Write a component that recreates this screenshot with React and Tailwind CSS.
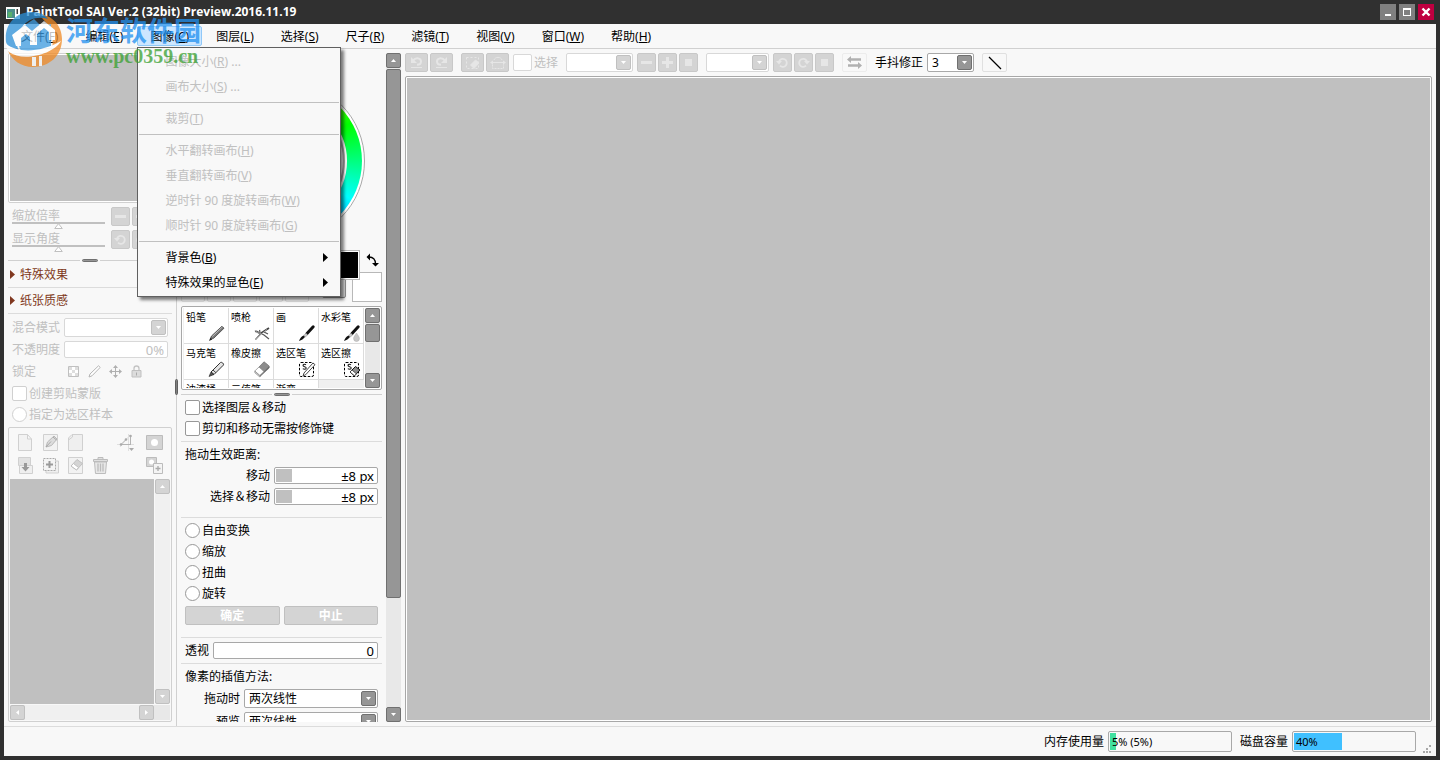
import React, { useState } from 'react';

const menus = [
  ['文件', 'F'],
  ['编辑', 'E'],
  ['图像', 'C'],
  ['图层', 'L'],
  ['选择', 'S'],
  ['尺子', 'R'],
  ['滤镜', 'T'],
  ['视图', 'V'],
  ['窗口', 'W'],
  ['帮助', 'H'],
];

const imageMenu = [
  { text: '图像大小', k: 'R', more: true, off: true },
  { text: '画布大小', k: 'S', more: true, off: true },
  null,
  { text: '裁剪', k: 'T', off: true },
  null,
  { text: '水平翻转画布', k: 'H', off: true },
  { text: '垂直翻转画布', k: 'V', off: true },
  { text: '逆时针 90 度旋转画布', k: 'W', off: true },
  { text: '顺时针 90 度旋转画布', k: 'G', off: true },
  null,
  { text: '背景色', k: 'B', sub: true },
  { text: '特殊效果的显色', k: 'E', sub: true },
];

/* ---------- small controls ---------- */

function Arrow({ dir = 'down', className = '' }) {
  const points = {
    down: '0,0 5,0 2.5,3',
    up: '0,3 5,3 2.5,0',
    left: '3,0 3,5 0,2.5',
    right: '0,0 0,5 3,2.5',
  };
  return (
    <svg width="5" height="5" viewBox={dir === 'left' || dir === 'right' ? '-1 0 5 5' : '0 -1 5 5'} className={className}>
      <polygon points={points[dir]} fill="#fff" />
    </svg>
  );
}

function ScrollButton({ dir, off }) {
  return (
    <button
      aria-label={dir}
      className={`flex size-[15px] shrink-0 items-center justify-center rounded-xs border ${
        off ? 'border-[#c0c0c0] bg-[#d4d4d4]' : 'border-[#707070] bg-[#969696]'
      }`}
    >
      <Arrow dir={dir} />
    </button>
  );
}

function Combo({ label, options = [''], off, className = '' }) {
  return (
    <div className={`relative h-[19px] ${className}`}>
      <select
        aria-label={label}
        disabled={off}
        className={`block h-full w-full appearance-none rounded-xs border bg-white pl-1 text-xs leading-4 opacity-100 ${
          off ? 'border-[#d8d8d8]' : 'border-[#a8a8a8]'
        }`}
      >
        {options.map((o) => (
          <option key={o}>{o}</option>
        ))}
      </select>
      <span
        className={`pointer-events-none absolute top-0.5 right-0.5 flex size-[15px] items-center justify-center rounded-xs border ${
          off ? 'border-[#c0c0c0] bg-[#d4d4d4]' : 'border-[#707070] bg-[#969696]'
        }`}
      >
        <Arrow />
      </span>
    </div>
  );
}

function Check({ type = 'checkbox', name, label, off }) {
  return (
    <label className={`flex h-[17px] items-center gap-0.5 ${off ? 'text-[#c0c0c0]' : ''}`}>
      <input
        type={type}
        name={name}
        disabled={off}
        className={`size-[15px] shrink-0 appearance-none border bg-white ${
          type === 'radio' ? 'rounded-full' : 'rounded-xs'
        } ${off ? 'border-[#d0d0d0]' : 'border-[#989898]'} checked:bg-[#969696]`}
      />
      {label}
    </label>
  );
}

function ToolButton({ label, wide, children }) {
  return (
    <button
      aria-label={label}
      disabled
      className={`flex h-[19px] shrink-0 items-center justify-center rounded-xs border border-[#c8c8c8] bg-[#d4d4d4] text-[#e6e6e6] ${
        wide ? 'w-[23px]' : 'w-[19px]'
      }`}
    >
      {children}
    </button>
  );
}

function Splitter() {
  return (
    <div className="flex h-[3px] shrink-0 items-center gap-0.5">
      <span className="h-px flex-1 bg-[#d0d0d0]" />
      <span className="h-[3px] w-4 rounded-full border border-[#707070] bg-[#969696]" />
      <span className="h-px flex-1 bg-[#d0d0d0]" />
    </div>
  );
}

function Line() {
  return <div className="h-px shrink-0 bg-[#dcdcdc]" />;
}

function ViewSlider({ label }) {
  return (
    <label className="relative block w-[93px] text-[#c0c0c0]">
      <span className="block h-[15px] leading-[17px]">{label}</span>
      <input
        type="range"
        disabled
        className="block h-0.5 w-full appearance-none bg-[#c0c0c0] [&::-webkit-slider-thumb]:size-2 [&::-webkit-slider-thumb]:appearance-none [&::-webkit-slider-thumb]:opacity-0"
      />
      <svg width="9" height="6" className="absolute top-4 left-[42px]">
        <path d="M4.500 .7 8.300 5.500H.7z" fill="#fff" stroke="#c0c0c0" />
      </svg>
    </label>
  );
}

function DragField({ label }) {
  return (
    <label className="flex h-[17px] items-center justify-end gap-1 px-1">
      {label}
      <span className="relative block h-[17px] w-[104px]">
        <input
          type="text"
          defaultValue="±8 px"
          className="block h-full w-full rounded-xs border border-[#a8a8a8] bg-white pr-[3px] text-right text-[13px] leading-[15px]"
        />
        <span className="absolute top-0.5 left-0.5 h-[13px] w-4 bg-[#c0c0c0]" />
      </span>
    </label>
  );
}

/* ---------- icons ---------- */

function Rotate({ flip }) {
  return (
    <svg width="13" height="13" viewBox="0 0 13 13" fill="none" className={flip ? '-scale-x-100' : ''}>
      <path d="M3 5.500A4 4 0 1 1 4 9.700" stroke="currentColor" strokeWidth="1.800" />
      <path d="M0 5h6L3 8.500z" fill="currentColor" />
    </svg>
  );
}

function Undo({ flip }) {
  return (
    <svg width="15" height="13" viewBox="0 0 15 13" fill="none" className={flip ? '-scale-x-100' : ''}>
      <path d="M4 4.500C7 1 12 2 12 5.500c0 2-1.500 3.200-4 3.200" stroke="currentColor" strokeWidth="2" />
      <path d="M2 1v6h6z" fill="currentColor" />
      <path d="M2 11.500h11" stroke="currentColor" />
    </svg>
  );
}

function Minus() {
  return (
    <svg width="11" height="11"><path d="M0 4h11v3H0z" fill="currentColor" /></svg>
  );
}

function Plus() {
  return (
    <svg width="11" height="11"><path d="M0 4h4V0h3v4h4v3H7v4H4V7H0z" fill="currentColor" /></svg>
  );
}

function Square() {
  return (
    <svg width="7" height="7"><path d="M0 0h7v7H0z" fill="currentColor" /></svg>
  );
}

function BrushIcon({ kind }) {
  return (
    <svg width="18" height="18" viewBox="0 0 18 18" fill="none">
      {kind === 'pencil' && (
        <>
          <path d="M2 15.500 3.500 12 14 2.200l2 2L5.700 14.300z" fill="#777" stroke="#444" strokeWidth=".8" />
          <path d="M4.300 12.500 14.500 2.800" stroke="#ccc" strokeWidth=".8" />
          <path d="m1 17 1.500-3.300L4.200 15.500z" fill="#222" />
        </>
      )}
      {kind === 'air' && (
        <>
          <path d="M2 7.500c2-.8 3.500 1.500 5.500 2L16 4" stroke="#444" strokeWidth="1.800" />
          <path d="M2.500 15.500 8 9.500l3 1.500 5 4M7 8l-.5-2M11 8l4 2" stroke="#555" strokeWidth="1.200" />
          <path d="M3 15 14 5.300M2.500 7.300 8 10" stroke="#d8d8d8" strokeWidth=".6" />
        </>
      )}
      {(kind === 'brush' || kind === 'water') && (
        <>
          <path d="M9 9.500 15.200 2.800" stroke="#111" strokeWidth="3" strokeLinecap="round" />
          <path d="m5.800 11.500 2.200-2.200 1.600 1.500-2.200 2.200z" fill="#ccc" stroke="#777" strokeWidth=".5" />
          <path d="M1 17c1-2.500 2-4.500 4.500-5.500L7 13c-1.500 2-3.500 3.200-6 4z" fill="#111" />
          {kind === 'water' && (
            <path d="M13.500 9c1.500 2.600 2.900 3.800 2.900 5.600a2.900 2.900 0 0 1-5.800 0c0-1.800 1.400-3 2.900-5.600z" fill="#c8c8c8" stroke="#aaa" strokeWidth=".5" />
          )}
        </>
      )}
      {kind === 'marker' && (
        <>
          <path d="M3 12 12.500 2.500c1-1 4 1.500 2.800 2.700L6 14.500z" fill="#e4e4e4" stroke="#333" />
          <path d="M1 16.500 3 12l3 2.500z" fill="#555" stroke="#222" strokeWidth=".6" />
          <path d="m5 10 3 2.800" stroke="#444" />
        </>
      )}
      {kind === 'eraser' && (
        <>
          <path d="M6 7 11 1.800 16.200 6 16.200 8 7 16.500z" fill="#6c6c6c" stroke="#666" strokeWidth=".6" />
          <path d="M6 7 11 1.800 16.200 6 11 11.500z" fill="#8c8c8c" />
          <path d="M1.800 11 6 7l5 4.500-4.200 4z" fill="#fff" stroke="#888" strokeWidth=".7" />
          <path d="M1.800 11v1.800L6.800 17v-1.500z" fill="#ccc" stroke="#888" strokeWidth=".6" />
        </>
      )}
      {(kind === 'selpen' || kind === 'seler') && (
        <>
          <rect x="1.500" y="2.500" width="14" height="14" rx="1.500" stroke="#000" strokeDasharray="2.500 1.500" />
          <path d="M8 4.800C7 4 5 4.200 5 5.500 5 7 8.200 6.500 8.200 8 8.200 9.400 6 9.500 4.800 8.600" stroke="#222" strokeWidth="1.100" />
          {kind === 'selpen' ? (
            <path d="m5 16 1-3 9-10 2 1.700-9.300 10z" fill="#fff" stroke="#333" strokeWidth=".9" />
          ) : (
            <>
              <path d="m7 12 5.500-5.500L17 10l-5.500 5.800z" fill="#8c8c8c" stroke="#111" />
              <path d="m7 12 2-2 4.300 3.800-1.800 2z" fill="#fff" stroke="#222" strokeWidth=".7" />
            </>
          )}
        </>
      )}
    </svg>
  );
}

function PageIcon({ kind }) {
  return (
    <svg width="17" height="17" viewBox="0 0 17 17" fill="none" stroke="#d0d0d0">
      {kind === 'new' && <path d="M1.500.5h9l4 4.500v11.500h-13zM10.500.5V5h4" fill="#f2f2f2" />}
      {kind === 'pen' && (
        <>
          <path d="M1.500.5h14v16h-14z" fill="#f2f2f2" />
          <path d="m4 13 1.500-5L12 2l3 3-5.500 6.500z" fill="#dcdcdc" stroke="#b8b8b8" />
          <path d="m4 13 5-5.500M11 3l3.500 3" stroke="#a8a8a8" />
        </>
      )}
      {kind === 'folder' && (
        <>
          <path d="M5 .5h10.500v16h-14V4z" fill="#efefef" />
          <path d="M5.500.5V3l-4 3" />
        </>
      )}
      {kind === 'down' && (
        <>
          <path d="M1.500.5h12v8h-12z" fill="#e2e2e2" />
          <path d="M2.500 8.500h13v8h-13z" fill="#efefef" />
          <path d="M7 6h3v4h2.500l-4 4.500-4-4.500H7z" fill="#999" stroke="none" />
        </>
      )}
      {kind === 'add' && (
        <>
          <path d="M4 4h12.500v12H4z" fill="#efefef" />
          <path d="M1.500 1.500h12v12h-12z" fill="#f4f4f4" stroke="#aaa" strokeDasharray="2 1" />
          <path d="M7.500 4v7M4 7.500h7" stroke="#999" strokeWidth="2" />
        </>
      )}
      {kind === 'erase' && (
        <>
          <path d="M1.500.5h14v16h-14z" fill="#f2f2f2" />
          <path d="m4 9 6-6.500 5.500 4L9.500 13z" fill="#d4d4d4" stroke="#c0c0c0" />
          <path d="m4 9 2.500-2.500 5 4L9.500 13z" fill="#fff" stroke="#c0c0c0" />
        </>
      )}
      {kind === 'trash' && (
        <>
          <path d="M6 2V.5h5V2M1.500 2.500h14v2h-14z" fill="#e0e0e0" stroke="#bcbcbc" />
          <path d="m2.500 5 1 11.500h10l1-11.500z" fill="#e8e8e8" stroke="#bcbcbc" />
          <path d="M6 6.500v8M8.500 6.500v8M11 6.500v8" stroke="#bcbcbc" strokeWidth="1.300" />
        </>
      )}
      {kind === 'axis' && (
        <>
          <path d="M0 10.500h17M11.500 0v17M3 13 13 1" stroke="#e0e0e0" />
          <path d="M4 10.500h9M13.500 1v10M4 10.500l5-5" stroke="#b4b4b4" />
          <circle cx="4" cy="10.500" r="1.300" fill="#aaa" stroke="none" />
          <circle cx="9" cy="5.500" r="1.300" fill="#aaa" stroke="none" />
          <circle cx="13.500" cy="2" r="1.300" fill="#aaa" stroke="none" />
          <path d="M12 14h5l-2.500 3z" fill="#aaa" stroke="none" />
        </>
      )}
      {kind === 'mask' && (
        <>
          <path d="M.5 1.500h16v14H.5z" fill="#d4d4d4" stroke="#bcbcbc" />
          <circle cx="8.500" cy="8.500" r="3.500" fill="#fff" stroke="none" />
        </>
      )}
      {kind === 'maskadd' && (
        <>
          <path d="M.5.5h10v9H.5z" fill="#d4d4d4" stroke="#bcbcbc" />
          <circle cx="5.500" cy="5" r="2.500" fill="#fff" stroke="none" />
          <path d="M7.500 6.500h9v10h-9z" fill="#f4f4f4" stroke="#bcbcbc" />
          <path d="M12 9v5M9.500 11.500h5" stroke="#aaa" strokeWidth="1.300" />
        </>
      )}
    </svg>
  );
}

function LockIcon({ kind }) {
  return (
    <svg width="13" height="13" viewBox="0 0 13 13" fill="none" stroke="#c0c0c0">
      {kind === 'alpha' && (
        <>
          <path d="M1.500 1.500h10v10h-10z" fill="#fff" />
          <path d="M2 2h3v3H2zM8 2h3v3H8zM5 5h3v3H5zM2 8h3v3H2zM8 8h3v3H8z" fill="#dedede" stroke="none" />
        </>
      )}
      {kind === 'pen' && <path d="m1 12 1-3L10.500.8l1.700 1.600L4 10.800z" fill="#fff" stroke="#b4b4b4" />}
      {kind === 'move' && (
        <>
          <path d="M6.500 2v9M2 6.500h9" stroke="#b0b0b0" />
          <path d="m6.500 0 2.500 3H4zM6.500 13 4 10h5zM0 6.500 3 4v5zM13 6.500 10 9V4z" fill="#b0b0b0" stroke="none" />
        </>
      )}
      {kind === 'lock' && (
        <>
          <path d="M4 6V3.500a2.500 2.500 0 0 1 5 0V6" stroke="#c4c4c4" strokeWidth="1.300" />
          <path d="M2 5.500h9v6.500H2z" fill="#dcdcdc" stroke="#c0c0c0" />
          <path d="M6.500 7.500v3" stroke="#aaa" />
        </>
      )}
    </svg>
  );
}

/* ---------- top ---------- */

function TitleBar() {
  return (
    <header className="flex h-6 shrink-0 items-center px-0.5 text-white">
      <svg width="14" height="12" viewBox="0 0 14 12" className="mt-0.5">
        <path d="M0 0h14v12H0z" fill="#fff" />
        <path d="M1 2h8v9H1z" fill="#4c8f8a" />
        <path d="M2 5h4v5H2z" fill="#58b06c" />
        <path d="M10.500 2H12v5h-1.500z" fill="#404040" />
      </svg>
      <h1 className="ml-1.5 flex-1 font-['Open_Sans',sans-serif] text-xs font-bold">
        PaintTool SAI Ver.2 (32bit) Preview.2016.11.19
      </h1>
      <div className="flex gap-[3px]">
        <button aria-label="最小化" className="size-4 bg-[#808080]">
          <svg width="16" height="16"><path d="M5 10h6v2H5z" fill="#fff" /></svg>
        </button>
        <button aria-label="最大化" className="size-4 bg-[#808080]">
          <svg width="16" height="16"><path d="M4 4h8v8H4zM5 6v5h6V6z" fill="#fff" fillRule="evenodd" /></svg>
        </button>
        <button aria-label="关闭" className="size-4 bg-[#c00040]">
          <svg width="16" height="16"><path d="m4.500 4.500 7 7m0-7-7 7" stroke="#fff" strokeWidth="2.400" /></svg>
        </button>
      </div>
    </header>
  );
}

function ImageMenu() {
  return (
    <div className="absolute top-[21px] left-0 z-20 w-[204px] border border-[#606060] bg-[#f8f8f8] py-px shadow-[3px_3px_3px_rgba(0,0,0,0.5)]">
      {imageMenu.map((item, i) =>
        item ? (
          <button
            key={i}
            disabled={item.off}
            className={`flex h-[25px] w-full items-center pr-3 pl-[27px] ${item.off ? 'text-[#c0c0c0]' : 'text-black'}`}
          >
            <span className="flex-1 text-left">
              {item.text}(<u>{item.k}</u>){item.more && ' ...'}
            </span>
            {item.sub && (
              <svg width="5" height="9"><path d="M0 0l5 4.500L0 9z" fill="#000" /></svg>
            )}
          </button>
        ) : (
          <div key={i} className="mx-px my-[3px] h-px bg-[#c0c0c0]" />
        )
      )}
    </div>
  );
}

function MenuBar() {
  const [open, setOpen] = useState('C');
  return (
    <nav className="flex h-[25px] shrink-0 items-center gap-px border-b border-[#d0d0d0] pl-1">
      {menus.map(([text, k]) => (
        <div key={k} className="relative">
          <button
            onClick={() => setOpen(open === k ? null : k)}
            className={`flex h-5 items-center rounded-xs border px-3 pt-0.5 ${
              open === k ? 'border-[#90c8f8] bg-[#cce6ff]' : 'border-transparent'
            }`}
          >
            {text}(<u>{k}</u>)
          </button>
          {k === 'C' && open === 'C' && <ImageMenu />}
        </div>
      ))}
    </nav>
  );
}

/* ---------- left ---------- */

function LayerPanel() {
  return (
    <section className="flex min-h-0 flex-1 flex-col rounded-xs border border-[#d0d0d0] p-px">
      <div className="flex h-[50px] shrink-0 justify-between px-[7px] pt-[5px]">
        <div className="grid grid-cols-4 content-start gap-x-2 gap-y-1.5">
          {['new', 'pen', 'folder', '', 'down', 'add', 'erase', 'trash'].map((kind, i) => (
            <button key={i} disabled aria-label={kind || undefined} className="size-[17px]">
              {kind && <PageIcon kind={kind} />}
            </button>
          ))}
        </div>
        <div className="grid grid-cols-2 content-start gap-x-3 gap-y-1.5">
          {['axis', 'mask', '', 'maskadd'].map((kind, i) => (
            <button key={i} disabled aria-label={kind || undefined} className="size-[17px]">
              {kind && <PageIcon kind={kind} />}
            </button>
          ))}
        </div>
      </div>
      <div className="flex min-h-0 flex-1 gap-px">
        <div className="flex-1 bg-[#c0c0c0]" />
        <div className="flex flex-col justify-between bg-[#f0f0f0]">
          <ScrollButton dir="up" off />
          <ScrollButton dir="down" off />
        </div>
      </div>
      <div className="mt-px flex bg-[#e8e8e8] pr-4">
        <ScrollButton dir="left" off />
        <div className="flex-1 bg-[#f0f0f0]" />
        <ScrollButton dir="right" off />
      </div>
    </section>
  );
}

function LeftColumn() {
  return (
    <aside className="relative flex w-[173px] shrink-0 flex-col border-r border-[#d0d0d0] p-1">
      <div className="h-[150px] shrink-0 rounded-xs border border-[#d0d0d0] bg-white p-px">
        <div className="h-full bg-[#c0c0c0]" />
      </div>
      <div className="mt-1 flex flex-col gap-1 pl-1">
        {['缩放倍率', '显示角度'].map((label, i) => (
          <div key={label} className="flex h-[19px] gap-0.5">
            <ViewSlider label={label} />
            <span className="w-0.5" />
            <ToolButton label={label + ' -'}>{i ? <Rotate /> : <Minus />}</ToolButton>
            <ToolButton label={label + ' +'}>{i ? <Rotate flip /> : <Plus />}</ToolButton>
            <ToolButton label={label + ' 重置'}><Square /></ToolButton>
          </div>
        ))}
      </div>
      <div className="mt-[10px]">
        <Splitter />
      </div>
      {['特殊效果', '纸张质感'].map((text) => (
        <button
          key={text}
          className="flex h-[26px] shrink-0 items-center gap-[5px] border-b border-[#dcdcdc] pl-0.5 text-[#803820]"
        >
          <svg width="5" height="9"><path d="M0 0l5 4.500L0 9z" fill="#803820" /></svg>
          {text}
        </button>
      ))}
      <div className="flex flex-col gap-1 px-1 py-1 text-[#c0c0c0]">
        <div className="flex h-[19px] items-center gap-1">
          混合模式
          <Combo label="混合模式" off className="flex-1" />
        </div>
        <label className="flex h-[17px] items-center gap-1">
          不透明度
          <input
            type="text"
            disabled
            defaultValue="0%"
            className="h-full min-w-0 flex-1 rounded-xs border border-[#d8d8d8] bg-white pr-[3px] text-right text-[13px] leading-[15px]"
          />
        </label>
        <div className="flex h-[19px] items-center">
          <span className="w-[51px]">锁定</span>
          {['alpha', 'pen', 'move', 'lock'].map((kind) => (
            <button key={kind} disabled aria-label={kind} className="flex h-[19px] w-[21px] items-center justify-center">
              <LockIcon kind={kind} />
            </button>
          ))}
        </div>
        <Check label="创建剪贴蒙版" off />
        <Check type="radio" label="指定为选区样本" off />
      </div>
      <LayerPanel />
      <span className="absolute top-[330px] -right-0.5 h-4 w-[3px] rounded-full border border-[#606060] bg-[#808080]" />
    </aside>
  );
}

/* ---------- middle ---------- */

function ColorWheel() {
  return (
    <div className="ml-6 size-40 rounded-full border border-[#a8a8a8] bg-white p-0.5">
      <div className="flex size-full items-center justify-center rounded-full bg-[conic-gradient(#ff0,#0f0,#0ff,#00f,#f0f,#f00,#ff0)]">
        <div className="size-[124px] rounded-full border-2 border-white bg-[#a8a8a8] p-0.5">
          <div className="flex size-full items-center justify-center rounded-full bg-[#f8f8f8]">
            <div className="size-20 bg-[linear-gradient(to_top,#000,transparent),linear-gradient(to_right,#fff,#f00)]" />
          </div>
        </div>
      </div>
    </div>
  );
}

function ColorBar() {
  return (
    <div className="mt-[9px] flex h-[52px] items-end gap-0.5">
      {[1, 2, 3, 4, 5].map((n) => (
        <button key={n} aria-label={'工具 ' + n} className="h-[19px] w-6 rounded-xs border border-[#e0e0e0]" />
      ))}
      <div className="relative ml-auto h-[52px] w-[52px]">
        <span className="absolute top-7 -left-2 h-5 w-6 rounded-xs border border-[#909090] bg-[#e0e0e0]" />
        <span className="absolute right-0 bottom-0 size-[30px] border border-[#b8b8b8] bg-white" />
        <span className="absolute top-0 left-0 size-[30px] border border-[#b8b8b8] bg-white p-px">
          <span className="block size-full bg-black" />
        </span>
        <svg width="14" height="14" viewBox="0 0 14 14" fill="none" className="absolute top-[3px] right-0.5">
          <path d="M3 4c4 0 6.500 2 6.500 7" stroke="#000" strokeWidth="1.400" />
          <path d="M.5 4 4 .5v7zM9.500 13.500 6 10h7z" fill="#000" />
        </svg>
      </div>
    </div>
  );
}

const brushes = [
  ['铅笔', 'pencil'],
  ['喷枪', 'air'],
  ['画', 'brush'],
  ['水彩笔', 'water'],
  ['马克笔', 'marker'],
  ['橡皮擦', 'eraser'],
  ['选区笔', 'selpen'],
  ['选区擦', 'seler'],
  ['油漆桶', ''],
  ['二值笔', ''],
  ['渐变', ''],
];

function BrushBox() {
  return (
    <div className="mt-1 flex h-[84px] shrink-0 gap-px rounded-xs border border-[#a8a8a8] bg-white p-px">
      <div className="grid flex-1 auto-rows-[36px] grid-cols-4 overflow-hidden bg-[#f0f0f0] pl-px">
        {brushes.map(([name, kind]) => (
          <button
            key={name}
            className="relative flex h-9 items-start border-r border-b border-[#dcdcdc] bg-white pt-0.5 pl-0.5 text-[10px] leading-[14px]"
          >
            {name}
            <span className="absolute right-0.5 bottom-px">
              <BrushIcon kind={kind} />
            </span>
          </button>
        ))}
      </div>
      <div className="flex flex-col gap-px bg-[#e8e8e8]">
        <ScrollButton dir="up" />
        <div className="h-[18px] w-[15px] rounded-xs border border-[#707070] bg-[#969696]" />
        <div className="flex-1" />
        <ScrollButton dir="down" />
      </div>
    </div>
  );
}

function MiddleColumn() {
  return (
    <aside className="flex shrink-0 gap-1 p-1">
      <div className="w-[201px] overflow-hidden">
        <div className="pt-7">
          <ColorWheel />
        </div>
        <ColorBar />
        <BrushBox />
        <div className="mt-[3px]">
          <Splitter />
        </div>
        <div className="mt-[3px] flex flex-col gap-1">
          <div className="flex flex-col gap-1 px-1">
            <Check label="选择图层＆移动" />
            <Check label="剪切和移动无需按修饰键" />
          </div>
          <Line />
          <div className="h-[17px] px-1 leading-[17px]">拖动生效距离:</div>
          <DragField label="移动" />
          <DragField label="选择＆移动" />
          <div className="pt-2">
            <Line />
          </div>
          <div className="flex flex-col gap-1 px-1">
            {['自由变换', '缩放', '扭曲', '旋转'].map((t) => (
              <Check key={t} type="radio" name="transform" label={t} />
            ))}
            <div className="flex gap-1">
              {['确定', '中止'].map((t) => (
                <button
                  key={t}
                  disabled
                  className="h-[19px] flex-1 rounded-xs border border-[#c0c0c0] bg-[#d4d4d4] leading-[17px] font-bold text-white"
                >
                  {t}
                </button>
              ))}
            </div>
          </div>
          <div className="pt-2">
            <Line />
          </div>
          <label className="flex h-[17px] items-center gap-1 px-1">
            透视
            <input
              type="text"
              defaultValue="0"
              className="h-full min-w-0 flex-1 rounded-xs border border-[#a8a8a8] bg-white pr-[3px] text-right text-[13px] leading-[15px]"
            />
          </label>
          <Line />
          <div className="h-[17px] px-1 leading-[17px]">像素的插值方法:</div>
          {['拖动时', '预览'].map((t) => (
            <div key={t} className="flex h-[19px] items-center justify-end gap-1 px-1">
              {t}
              <Combo label={t} options={['两次线性']} className="w-[134px]" />
            </div>
          ))}
        </div>
      </div>
      <div className="flex w-[15px] flex-col gap-px bg-[#e8e8e8]">
        <ScrollButton dir="up" />
        <div className="h-[529px] rounded-xs border border-[#707070] bg-[#969696]" />
        <div className="flex-1" />
        <ScrollButton dir="down" />
      </div>
    </aside>
  );
}

/* ---------- right ---------- */

function Toolbar() {
  return (
    <div className="flex h-[19px] shrink-0 items-center gap-2">
      <div className="flex gap-0.5">
        <ToolButton label="撤销" wide><Undo /></ToolButton>
        <ToolButton label="重做" wide><Undo flip /></ToolButton>
      </div>
      <div className="flex gap-0.5">
        <ToolButton label="取消选择" wide>
          <svg width="15" height="14" viewBox="0 0 15 14" fill="none" stroke="currentColor">
            <path d="M1.500 1.500h12v11h-12z" strokeDasharray="2 2" />
            <path d="m5.500 9 5-5 3.500 3-5 5.500z" fill="currentColor" />
          </svg>
        </ToolButton>
        <ToolButton label="反选" wide>
          <svg width="16" height="14" viewBox="0 0 16 14" fill="none" stroke="currentColor">
            <path d="M2 6.500h12M4 4c1-3.500 7-3.500 8 0" />
            <path d="M2.500 8.500v4h11v-4" strokeDasharray="2 1" />
            <path d="M0 6.500l3-2v4zM16 6.500l-3-2v4z" fill="currentColor" stroke="none" />
          </svg>
        </ToolButton>
        <label className="ml-0.5 flex items-center gap-0.5 text-[#c0c0c0]">
          <input type="checkbox" disabled className="h-[17px] w-[19px] appearance-none rounded-xs border border-[#d8d8d8] bg-white" />
          选择
        </label>
      </div>
      <div className="flex gap-0.5">
        <Combo label="缩放倍率" off className="mr-0.5 w-[67px]" />
        <ToolButton label="缩小"><Minus /></ToolButton>
        <ToolButton label="放大"><Plus /></ToolButton>
        <ToolButton label="重置缩放"><Square /></ToolButton>
      </div>
      <div className="flex gap-0.5">
        <Combo label="显示角度" off className="mr-0.5 w-[63px]" />
        <ToolButton label="逆时针旋转"><Rotate /></ToolButton>
        <ToolButton label="顺时针旋转"><Rotate flip /></ToolButton>
        <ToolButton label="重置旋转"><Square /></ToolButton>
      </div>
      <button disabled aria-label="水平翻转" className="flex h-[19px] w-[25px] items-center justify-center rounded-xs border border-[#ececec]">
        <svg width="15" height="13" fill="#b0b0b0">
          <path d="M0 3.500 4 0v2.200h10v2.600H4V7zM15 9.500 11 6v2.200H1v2.600h10V13z" />
        </svg>
      </button>
      <div className="flex items-center gap-1">
        手抖修正
        <Combo label="手抖修正" options={['3']} className="w-[47px]" />
      </div>
      <button aria-label="直线" className="flex h-[19px] w-[25px] items-center justify-center rounded-xs border border-[#e0e0e0]">
        <svg width="14" height="14"><path d="M1 1l12 12" stroke="#000" strokeWidth="1.300" /></svg>
      </button>
    </div>
  );
}

function Gauge({ label, text, percent, color }) {
  return (
    <div className="flex items-center gap-1">
      {label}
      <div
        role="progressbar"
        aria-label={label}
        aria-valuenow={percent}
        className="relative h-[21px] w-[124px] rounded-xs border border-[#a8a8a8] p-px"
      >
        <div className={`h-full ${color}`} style={{ width: percent + '%' }} />
        <span className="absolute inset-y-0 left-[3px] text-[11px] leading-[19px]">{text}</span>
      </div>
    </div>
  );
}

function StatusBar() {
  return (
    <footer className="relative flex h-[30px] shrink-0 items-center justify-end gap-2 border-t border-[#dcdcdc] pr-5">
      <Gauge label="内存使用量" text="5% (5%)" percent={5} color="bg-[#40e0a0]" />
      <Gauge label="磁盘容量" text="40%" percent={40} color="bg-[#40c0ff]" />
      <svg width="9" height="9" className="absolute right-1 bottom-0.5">
        <path d="M6 0h2v2H6zM3 3h2v2H3zM0 6h2v2H0zM3 6h2v2H3zM6 6h2v2H6z" fill="#a8a8a8" />
      </svg>
    </footer>
  );
}

function Watermark() {
  return (
    <div className="pointer-events-none absolute top-2.5 left-1 z-30 flex gap-[3px] opacity-75">
      <svg width="59" height="58" viewBox="0 0 59 58" fill="none">
        <path d="M34 4C49 5 58 16 58 29 58 46 45 57 29 57 17 57 8 50 4 41c14 7 34 5 44-3 3-12-3-24-14-34z" fill="#f08a24" />
        <path d="M2 32C0 14 12 2 28 2c8 0 13 3 16 7-10-3-20 0-26 8-6 7-7 16-3 24-7-2-12-5-13-9z" fill="#2a8fd8" />
        <path d="M18 17 30 9l8 8 9-3v24c-9 4-20 5-30 3-4-8-3-16 1-24z" fill="#3d9be0" />
        <path d="m8 25 13-10 7 6 12-10 11 9v10h-6v-8l-5-4-7 6v11h-7V27l-4-3-5 4v8h-5z" fill="#fff" />
        <path d="M2 34c12 9 34 9 55-3-8 14-39 21-52 11-2-2-3-5-3-8z" fill="#fff" />
        <path d="M28 47h4v9h-4zM35 46h3v10h-3z" fill="#fff" />
      </svg>
      <div className="pt-1">
        <p className="font-['Noto_Sans_CJK_SC',sans-serif] text-[27px] leading-8 font-bold text-[#2090f0]">河东软件园</p>
        <p className="font-['Liberation_Serif',serif] text-xl leading-5 font-bold text-[#38a030]">www.pc0359.cn</p>
      </div>
    </div>
  );
}

function App() {
  return (
    <div className="relative flex h-screen flex-col overflow-hidden bg-[#303030] px-1 pb-1 font-['Noto_Sans','Noto_Sans_CJK_SC',sans-serif] text-xs whitespace-nowrap text-black">
      <TitleBar />
      <div className="flex min-h-0 flex-1 flex-col bg-[#f8f8f8]">
        <MenuBar />
        <div className="flex min-h-0 flex-1">
          <LeftColumn />
          <MiddleColumn />
          <main className="flex min-w-0 flex-1 flex-col gap-1 py-1 pr-1">
            <Toolbar />
            <div className="flex-1 rounded-xs border border-[#a8a8a8] bg-white p-px">
              <div className="h-full bg-[#c0c0c0]" />
            </div>
          </main>
        </div>
        <StatusBar />
      </div>
      <Watermark />
    </div>
  );
}

export default App;
